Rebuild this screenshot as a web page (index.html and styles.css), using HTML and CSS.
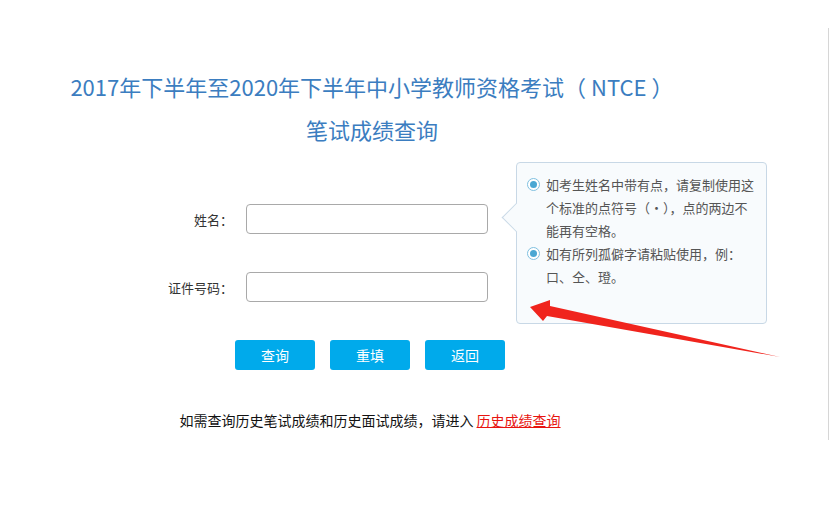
FILE: index.html
```html
<!DOCTYPE html>
<html lang="zh-CN">
<head>
    <meta charset="UTF-8">
    <meta name="viewport" content="width=device-width, initial-scale=1.0">
    <title>笔试成绩查询</title>
    <link rel="stylesheet" href="styles.css">
</head>
<body>

    <div class="page">
        <div class="content">
            <!-- 标题 -->
            <div class="title">
                <div>2017年下半年至2020年下半年中小学教师资格考试（<span class="abbr">NTCE</span>）</div>
                <div>笔试成绩查询</div>
            </div>

            <!-- 查询表单 -->
            <form class="query-form">
                <div class="form-row">
                    <label for="name">姓名：</label>
                    <input type="text" id="name">
                </div>
                <div class="form-row">
                    <label for="idno">证件号码：</label>
                    <input type="text" id="idno">
                </div>
                <div class="buttons">
                    <button type="button">查询</button>
                    <button type="reset">重填</button>
                    <button type="button">返回</button>
                </div>
            </form>

            <div class="footer">
                如需查询历史笔试成绩和历史面试成绩，请进入 <a href="#">历史成绩查询</a>
            </div>
        </div>

        <!-- 提示框 -->
        <div class="tip">
            <div class="tip-item">
                <span class="radio"></span>
                <span class="tip-text">如考生姓名中带有点，请复制使用这个标准的点符号（·），点的两边不能再有空格。</span>
            </div>
            <div class="tip-item">
                <span class="radio"></span>
                <span class="tip-text">如有所列孤僻字请粘贴使用，例：口、仝、璒。</span>
            </div>
        </div>

        <svg class="arrow" width="270" height="70" viewBox="0 0 270 70">
            <polygon points="10,12 30,5 30,11 260,62 27,21 23,26" fill="#f0241d"/>
        </svg>
    </div>

</body>
</html>
```

FILE: styles.css
```css
body {
    margin: 0;
    font-family: "Noto Sans CJK SC", "Noto Sans", sans-serif;
    background-color: #ffffff;
    color: #333333;
}

.page {
    position: relative;
    width: 828px;
    height: 412px;
    margin-top: 28px;
    border-right: 1px solid #d6d6d6;
}

.content {
    width: 740px;
}

.title {
    padding-top: 37px;
    padding-left: 4px;
    font-size: 22px;
    line-height: 43px;
    color: #3b7dc0;
    text-align: center;
}

.title .abbr {
    padding: 0 5px;
}

.query-form {
    margin-top: 53px;
}

.form-row {
    display: flex;
    align-items: center;
    height: 30px;
    margin-bottom: 38px;
}

.form-row label {
    width: 233px;
    margin-right: 13px;
    text-align: right;
    font-size: 13px;
}

.form-row input {
    box-sizing: border-box;
    width: 242px;
    height: 30px;
    border: 1px solid #a9a9a9;
    border-radius: 4px;
    padding: 0 8px;
    font-size: 13px;
}

.buttons {
    display: flex;
    justify-content: center;
    gap: 15px;
}

.buttons button {
    width: 80px;
    height: 30px;
    border: none;
    border-radius: 3px;
    background-color: #00aaeb;
    color: #ffffff;
    font-family: inherit;
    font-size: 14px;
    cursor: pointer;
}

.footer {
    margin-top: 40px;
    font-size: 14px;
    line-height: 20px;
    text-align: center;
    color: #111111;
}

.footer a {
    color: #e8140f;
    text-decoration: underline;
}

.tip {
    position: absolute;
    left: 516px;
    top: 134px;
    box-sizing: border-box;
    width: 251px;
    height: 162px;
    padding: 10px 10px 0 10px;
    background-color: #f8fbfd;
    border: 1px solid #c8d8e6;
    border-radius: 4px;
}

.tip::before {
    content: "";
    position: absolute;
    left: -11px;
    top: 44px;
    width: 20px;
    height: 20px;
    background-color: #f8fbfd;
    border-left: 1px solid #c8d8e6;
    border-bottom: 1px solid #c8d8e6;
    transform: rotate(45deg);
}

.tip-item {
    display: flex;
    align-items: flex-start;
    font-size: 13px;
    line-height: 23px;
    color: #555555;
}

.radio {
    flex: none;
    box-sizing: border-box;
    width: 13px;
    height: 13px;
    margin-top: 5px;
    margin-right: 6px;
    border: 1px solid #7fc0e0;
    border-radius: 50%;
    background-color: #ffffff;
    display: flex;
    align-items: center;
    justify-content: center;
}

.radio::after {
    content: "";
    width: 7px;
    height: 7px;
    border-radius: 50%;
    background-color: #4aa7d3;
}

.tip-text {
    width: 210px;
}

.arrow {
    position: absolute;
    left: 520px;
    top: 267px;
}
```
